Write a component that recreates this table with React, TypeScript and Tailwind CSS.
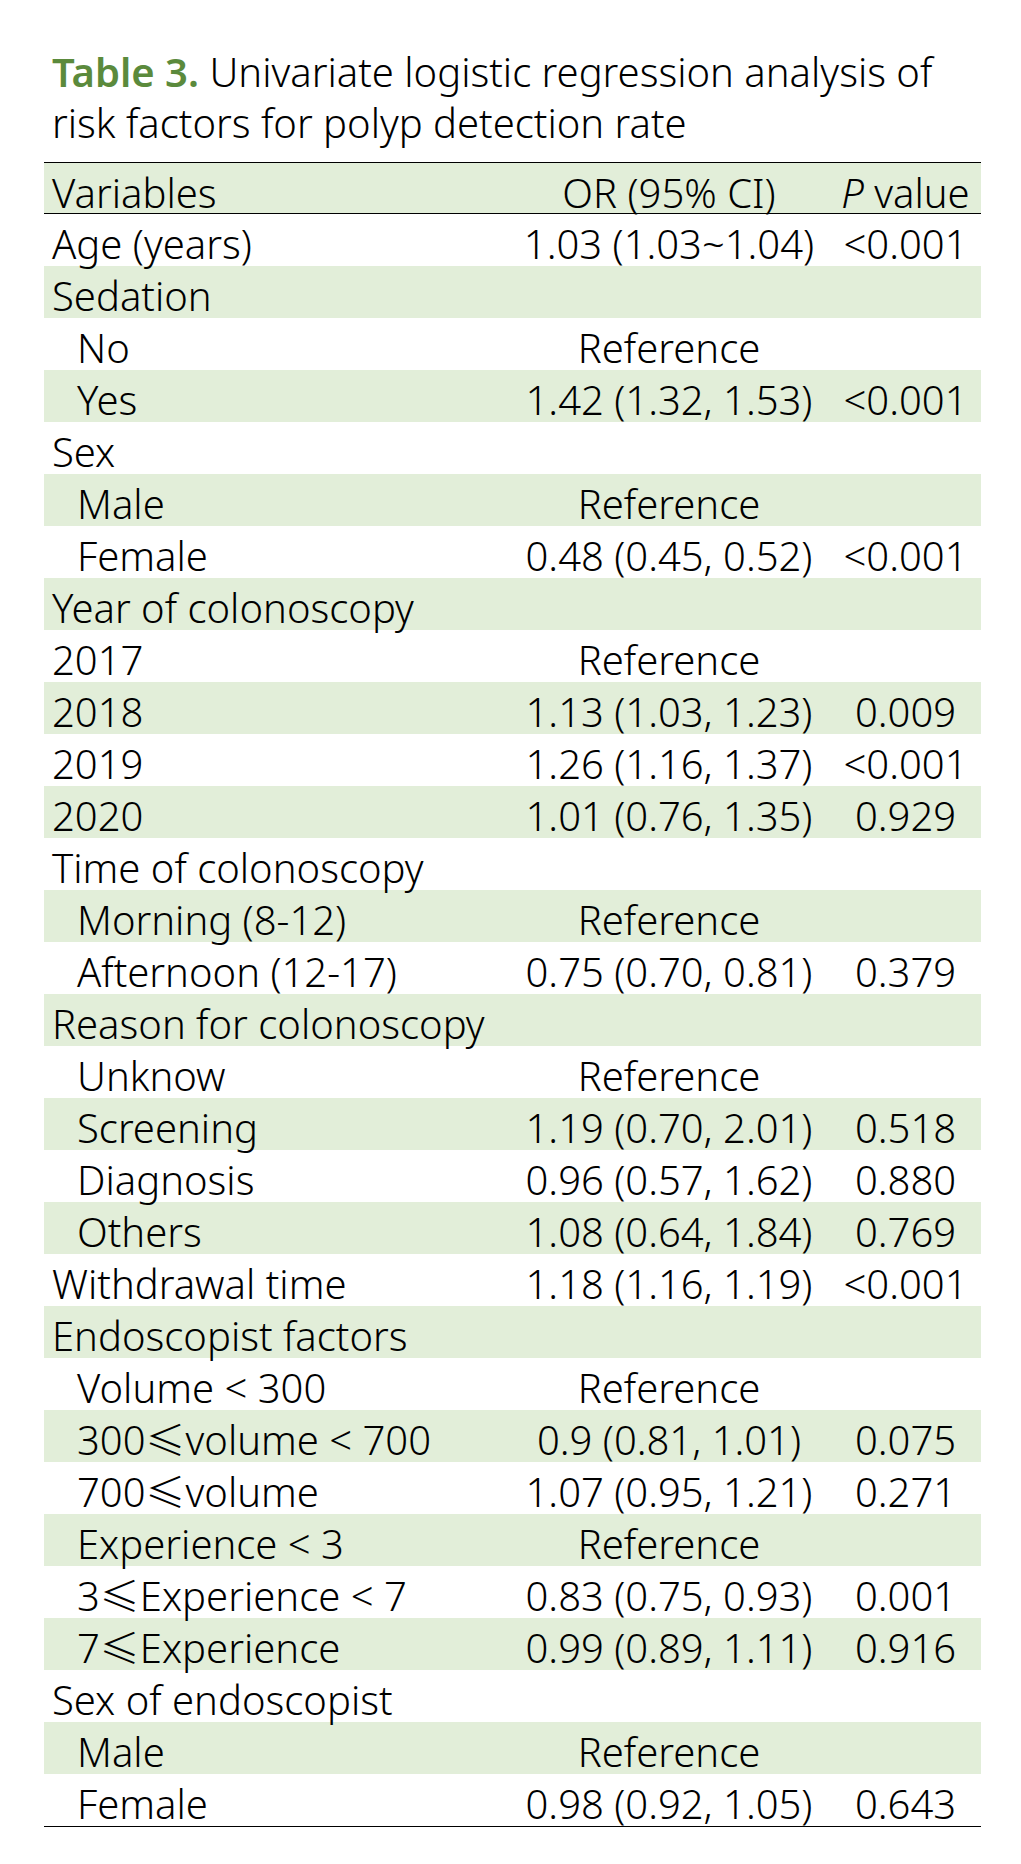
const rows: [string, number, string, string][] = [
  ["Age (years)", 0, "1.03 (1.03~1.04)", "<0.001"],
  ["Sedation", 0, "", ""],
  ["No", 1, "Reference", ""],
  ["Yes", 1, "1.42 (1.32, 1.53)", "<0.001"],
  ["Sex", 0, "", ""],
  ["Male", 1, "Reference", ""],
  ["Female", 1, "0.48 (0.45, 0.52)", "<0.001"],
  ["Year of colonoscopy", 0, "", ""],
  ["2017", 0, "Reference", ""],
  ["2018", 0, "1.13 (1.03, 1.23)", "0.009"],
  ["2019", 0, "1.26 (1.16, 1.37)", "<0.001"],
  ["2020", 0, "1.01 (0.76, 1.35)", "0.929"],
  ["Time of colonoscopy", 0, "", ""],
  ["Morning (8-12)", 1, "Reference", ""],
  ["Afternoon (12-17)", 1, "0.75 (0.70, 0.81)", "0.379"],
  ["Reason for colonoscopy", 0, "", ""],
  ["Unknow", 1, "Reference", ""],
  ["Screening", 1, "1.19 (0.70, 2.01)", "0.518"],
  ["Diagnosis", 1, "0.96 (0.57, 1.62)", "0.880"],
  ["Others", 1, "1.08 (0.64, 1.84)", "0.769"],
  ["Withdrawal time", 0, "1.18 (1.16, 1.19)", "<0.001"],
  ["Endoscopist factors", 0, "", ""],
  ["Volume < 300", 1, "Reference", ""],
  ["300≤volume < 700", 1, "0.9 (0.81, 1.01)", "0.075"],
  ["700≤volume", 1, "1.07 (0.95, 1.21)", "0.271"],
  ["Experience < 3", 1, "Reference", ""],
  ["3≤Experience < 7", 1, "0.83 (0.75, 0.93)", "0.001"],
  ["7≤Experience", 1, "0.99 (0.89, 1.11)", "0.916"],
  ["Sex of endoscopist", 0, "", ""],
  ["Male", 1, "Reference", ""],
  ["Female", 1, "0.98 (0.92, 1.05)", "0.643"],
];

export default function App() {
  return (
    <div
      className="w-[1021px] h-[1864px] bg-white text-black pt-[46px]"
      style={{ fontFamily: '"Noto Sans", "Noto Sans CJK SC", sans-serif' }}
    >
      <h1 className="ml-[52px] w-[905px] text-[40px] leading-[51px] font-light">
        <span className="font-semibold text-[#5b8a3c]">Table 3.</span>{" "}
        Univariate logistic regression analysis of risk factors for polyp
        detection rate
      </h1>
      <div className="mx-[44px] mt-[14px] w-[937px] border-t-[1.5px] border-b-[1.5px] border-black text-[40px] font-light">
        <div className="grid grid-cols-[464px_322px_151px] h-[51px] items-center bg-[#e2eed9] border-b-[1.5px] border-black">
          <div className="pl-[8px]">Variables</div>
          <div className="text-center">OR (95% CI)</div>
          <div className="text-center">
            <i>P</i> value
          </div>
        </div>
        {rows.map(([label, indent, or, p], i) => (
          <div
            key={i}
            className={`grid grid-cols-[464px_322px_151px] h-[52px] items-center ${
              i % 2 === 1 ? "bg-[#e2eed9]" : "bg-white"
            }`}
          >
            <div className={indent ? "pl-[33px]" : "pl-[8px]"}>{label}</div>
            <div className="text-center whitespace-nowrap">{or}</div>
            <div className="text-center">{p}</div>
          </div>
        ))}
      </div>
    </div>
  );
}
